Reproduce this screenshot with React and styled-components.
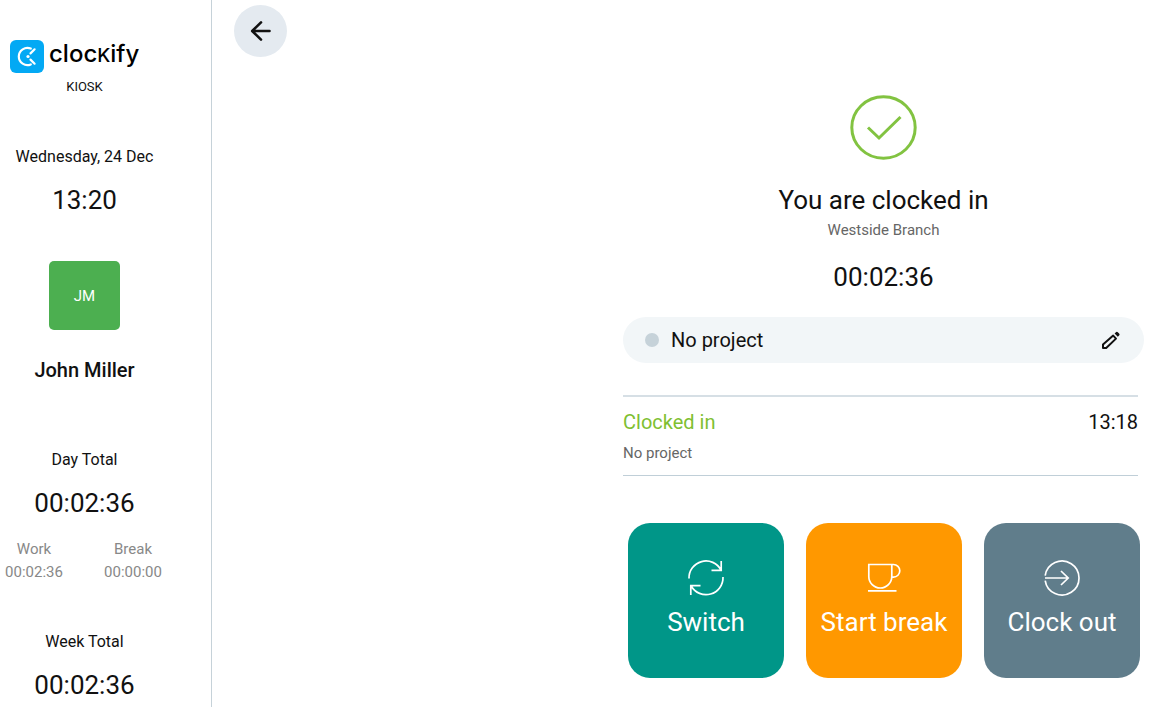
import React from "react";

import styled, { createGlobalStyle } from "styled-components";

const GlobalStyle = createGlobalStyle`
  * {
    box-sizing: border-box;
  }

  body {
    margin: 0;
    background: #fff;
    color: #111;
    font-family: Roboto, "Liberation Sans", sans-serif;
  }

  h1, h2, p, dl, dt, dd {
    margin: 0;
    font-weight: 400;
  }

  button {
    padding: 0;
    border: 0;
    font-family: inherit;
    cursor: pointer;
  }

  svg {
    display: block;
    fill: none;
  }
`;

const Page = styled.div`
  display: flex;
  min-height: 100vh;
`;

const Sidebar = styled.aside`
  flex: 0 0 212px;
  padding: 39px 42px 0 0;
  border-right: 1px solid #c6d2d9;
`;

const SidebarSection = styled.section`
  display: flex;
  flex-direction: column;
  align-items: center;
  margin-bottom: ${(props) => props.$space || 0}px;
`;

const Logo = styled.a`
  display: flex;
  align-items: center;
  align-self: flex-start;
  gap: 5px;
  height: 34px;
  padding-left: 10px;
  color: #000;
  text-decoration: none;
`;

const LogoText = styled.span`
  padding-bottom: 2px;
  font-family: Inter, sans-serif;
  font-size: 24px;
  font-weight: 500;
  line-height: 32px;

  span {
    font-size: 19px;
    text-transform: uppercase;
  }
`;

const Product = styled.p`
  margin-top: 6px;
  font-size: 13px;
  line-height: 16px;
`;

const Label = styled.p`
  font-size: 16px;
  line-height: 20px;
`;

const Time = styled.p`
  margin-top: ${(props) => props.$space || 0}px;
  font-size: 26px;
  line-height: 32px;
`;

const Avatar = styled.div`
  display: flex;
  align-items: center;
  justify-content: center;
  width: 71px;
  height: 69px;
  border-radius: 5px;
  background: #4caf50;
  color: #fff;
  font-size: 15px;
`;

const UserName = styled.h2`
  margin-top: 28px;
  font-size: 20px;
  font-weight: 500;
  line-height: 24px;
`;

const Split = styled.dl`
  display: flex;
  justify-content: space-between;
  width: 100%;
  margin-top: 20px;
  padding: 0 3px 0 1px;
  color: #888;
  font-size: 15px;
  text-align: center;

  div {
    width: 66px;
  }

  dt {
    line-height: 21px;
  }

  dd {
    line-height: 24px;
  }
`;

const Main = styled.main`
  display: flex;
  flex: 1;
  align-items: flex-start;
  justify-content: space-between;
  padding: 5px 24px 24px 22px;
`;

const BackButton = styled.button`
  display: flex;
  align-items: center;
  justify-content: center;
  width: 53px;
  height: 52px;
  border-radius: 50%;
  background: #e4eaf0;
`;

const Panel = styled.section`
  display: flex;
  flex-direction: column;
  align-items: center;
  width: 521px;
  padding-top: 90px;
`;

const Title = styled.h1`
  margin-top: 24px;
  font-size: 26px;
  line-height: 32px;
`;

const Branch = styled.p`
  margin-top: 4px;
  color: #666;
  font-size: 15px;
  line-height: 20px;
`;

const Project = styled.div`
  display: flex;
  align-items: center;
  width: 100%;
  height: 46px;
  margin-top: 24px;
  padding: 0 22px;
  border-radius: 23px;
  background: #f2f6f8;
  font-size: 20px;
`;

const Dot = styled.span`
  width: 14px;
  height: 14px;
  margin-right: 12px;
  border-radius: 50%;
  background: #c6d2d9;
`;

const EditButton = styled.button`
  margin-left: auto;
  background: transparent;
`;

const Entry = styled.div`
  align-self: flex-start;
  width: calc(100% - 6px);
  margin-top: 32px;
  padding: 13px 0 12px;
  border-top: 2px solid #d6dfe5;
  border-bottom: 1px solid #c0cfd8;
`;

const EntryRow = styled.div`
  display: flex;
  justify-content: space-between;
  font-size: 20px;
  line-height: 24px;
`;

const Status = styled.span`
  color: #7fbf32;
`;

const EntryProject = styled.p`
  margin-top: 9px;
  color: #666;
  font-size: 15px;
  line-height: 20px;
`;

const Actions = styled.div`
  display: grid;
  grid-template-columns: repeat(3, 1fr);
  gap: 22px;
  width: 100%;
  margin-top: 47px;
  padding: 0 4px 0 5px;
`;

const ActionButton = styled.button`
  display: flex;
  flex-direction: column;
  align-items: center;
  height: 155px;
  padding-top: 36px;
  border-radius: 22px;
  background: ${(props) => props.$color};
  color: #fff;
  font-size: 26px;
  line-height: 32px;
  white-space: nowrap;

  svg {
    margin-bottom: 9px;
    stroke: #fff;
    stroke-width: 1.7;
  }
`;

const LogoMark = () => (
  <svg width="34" height="33" viewBox="0 0 34 33">
    <rect width="34" height="33" rx="6" fill="#03a9f4" />
    <g stroke="#fff" strokeWidth="2.2" strokeLinecap="round">
      <path d="M20.8 8.6A8.6 8.6 0 1 0 20.8 24.4" />
      <path d="M20.5 13.4L24.6 9.3M20.5 19.6L24.6 23.7" />
    </g>
    <circle cx="18" cy="16.5" r="1.6" fill="#fff" />
  </svg>
);

const CheckIcon = () => (
  <svg width="67" height="65" viewBox="0 0 67 65" stroke="#82c341">
    <ellipse cx="33.5" cy="32.5" rx="31.7" ry="30.7" strokeWidth="3" />
    <path d="M18 32.5L29 43L50.5 22" strokeWidth="3" />
  </svg>
);

const SwitchIcon = () => (
  <svg width="38" height="38" viewBox="0 0 38 38">
    <path d="M2 19.5A17 17 0 0 1 34 11M34.2 2V11.3H24.5" />
    <path d="M36 18A17 17 0 0 1 4.2 27M3.8 36V26.7H13.5" />
  </svg>
);

const CupIcon = () => (
  <svg width="38" height="38" viewBox="0 0 38 38">
    <path d="M3.8 5.5H26.8V17.5A11.5 11.5 0 0 1 3.8 17.5ZM26.8 5.5H28.5A6.3 6.3 0 0 1 28.5 18.1H26.8M3 31.8H31.5" />
  </svg>
);

const ClockOutIcon = () => (
  <svg width="38" height="38" viewBox="0 0 38 38">
    <path d="M2.2 16.5A17 17 0 1 1 2.2 21.5M2 19H25M18 12L25.2 19L18 26" />
  </svg>
);

const actions = [
  { title: "Switch", color: "#009688", icon: <SwitchIcon /> },
  { title: "Start break", color: "#ff9800", icon: <CupIcon /> },
  { title: "Clock out", color: "#607d8b", icon: <ClockOutIcon /> },
];

const totals = [
  { title: "Work", value: "00:02:36" },
  { title: "Break", value: "00:00:00" },
];

const App = () => {
  return (
    <Page>
      <GlobalStyle />
      <Sidebar>
        <SidebarSection $space={52}>
          <Logo href="#">
            <LogoMark />
            <LogoText>
              cloc<span>k</span>ify
            </LogoText>
          </Logo>
          <Product>KIOSK</Product>
        </SidebarSection>
        <SidebarSection $space={45}>
          <Label>Wednesday, 24 Dec</Label>
          <Time $space={17}>13:20</Time>
        </SidebarSection>
        <SidebarSection $space={68}>
          <Avatar>JM</Avatar>
          <UserName>John Miller</UserName>
        </SidebarSection>
        <SidebarSection $space={48}>
          <Label>Day Total</Label>
          <Time $space={17}>00:02:36</Time>
          <Split>
            {totals.map((item) => (
              <div key={item.title}>
                <dt>{item.title}</dt>
                <dd>{item.value}</dd>
              </div>
            ))}
          </Split>
        </SidebarSection>
        <SidebarSection>
          <Label>Week Total</Label>
          <Time $space={17}>00:02:36</Time>
        </SidebarSection>
      </Sidebar>
      <Main>
        <BackButton aria-label="Back">
          <svg width="22" height="22" viewBox="0 0 22 22" stroke="#111">
            <path
              d="M19.5 11H2.5M11 2.4L2.2 11L11 19.6"
              strokeWidth="2.6"
              strokeLinecap="round"
              strokeLinejoin="round"
            />
          </svg>
        </BackButton>
        <Panel>
          <CheckIcon />
          <Title>You are clocked in</Title>
          <Branch>Westside Branch</Branch>
          <Time $space={21}>00:02:36</Time>
          <Project>
            <Dot />
            No project
            <EditButton aria-label="Edit project">
              <svg width="22" height="20" viewBox="0 0 22 20">
                <path
                  d="M3 18V14.6L13.2 5.6L16 8.6L6.2 18Z"
                  stroke="#111"
                  strokeWidth="2"
                  strokeLinejoin="round"
                />
                <path
                  d="M14.6 3.6L16.2 2.1Q17 1.5 17.8 2.2L19.3 3.8Q19.9 4.6 19.3 5.2L17.8 6.7Z"
                  fill="#111"
                />
              </svg>
            </EditButton>
          </Project>
          <Entry>
            <EntryRow>
              <Status>Clocked in</Status>
              <span>13:18</span>
            </EntryRow>
            <EntryProject>No project</EntryProject>
          </Entry>
          <Actions>
            {actions.map((item) => (
              <ActionButton key={item.title} $color={item.color}>
                {item.icon}
                {item.title}
              </ActionButton>
            ))}
          </Actions>
        </Panel>
      </Main>
    </Page>
  );
};

export default App;
